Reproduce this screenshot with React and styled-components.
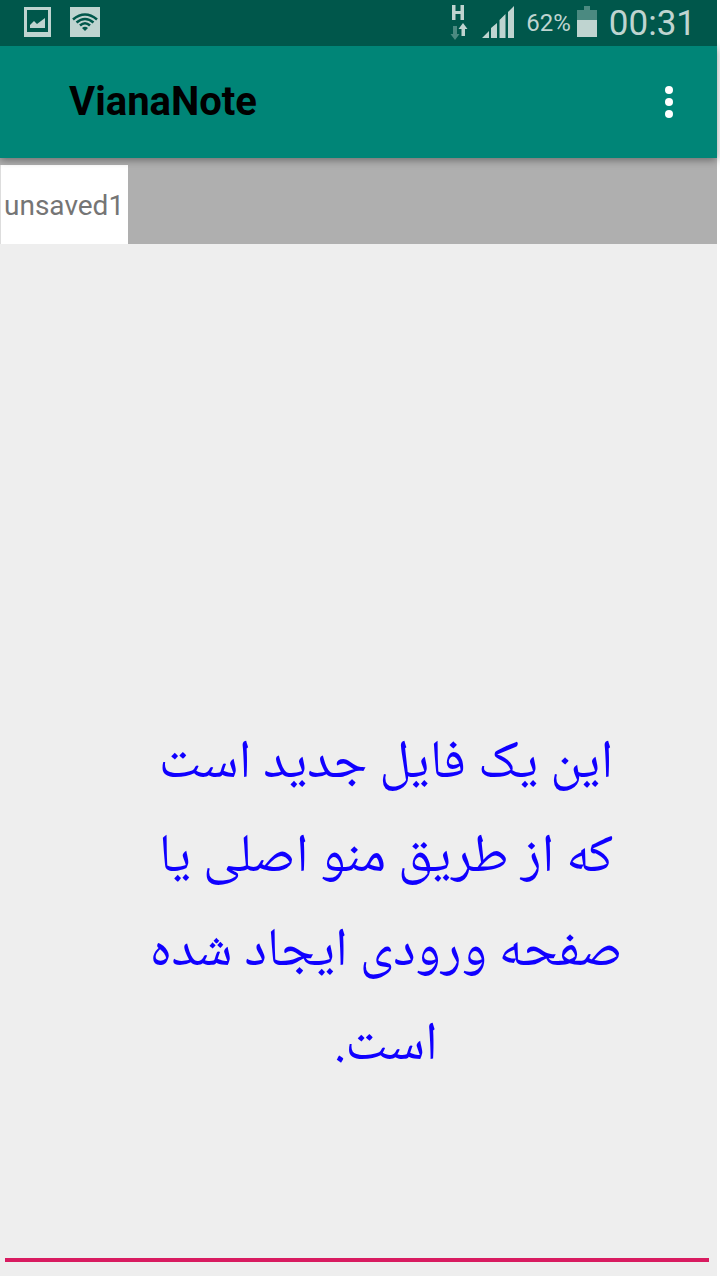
import React, { useState } from "react";
import styled, { createGlobalStyle } from "styled-components";

const textoInicial = [
  "این یک فایل جدید است",
  "که از طریق منو اصلی یا",
  "صفحه ورودی ایجاد شده",
  "است.",
].join("\n");

const IconeImagem = () => (
  <svg width="27" height="30" viewBox="0 0 27 30" fill="#bfd4d0">
    <path fillRule="evenodd" d="M0 0h27v30H0zM3 3v22h21V3z" />
    <path d="M6 21v-3l4-4 3 3 8-6v10z" />
  </svg>
);

const IconeWifi = () => (
  <svg width="30" height="30" viewBox="0 0 30 30">
    <path fill="#bfd4d0" d="M0 0h30v30H0z" />
    <g fill="none" stroke="#00574b" strokeWidth="2.6">
      <path d="M3 12.5Q15 2.5 27 12.5" />
      <path d="M6.5 15.5Q15 8.5 23.5 15.5" />
      <path d="M10 18.5Q15 14 20 18.5" />
    </g>
    <path fill="#00574b" d="M12 21q3-2.4 6 0l-3 3z" />
  </svg>
);

const IconeDados = () => (
  <svg width="20" height="36" viewBox="0 0 20 36">
    <path fill="#bfd4d0" d="M2 1h3.5v6h5V1H14v15h-3.500V10h-5v6H2z" />
    <path fill="#4b8a81" d="M3 22h4v8h2.500l-4.500 6-4.500-6H3z" />
    <path fill="#bfd4d0" d="M11.500 32v-7H8.500l4.500-6 4.500 6h-2.500v7z" />
  </svg>
);

const IconeSinal = () => (
  <svg width="32" height="32" viewBox="0 0 32 32" fill="#bfd4d0">
    <path d="M0 32l7-7v7zM9 32V22l6-5v15zM17.500 32V14l6-6v24zM26 32V6l6-6v32z" />
  </svg>
);

const IconeBateria = () => (
  <svg width="20" height="32" viewBox="0 0 20 32">
    <path fill="#4b8a81" d="M7 0h6v4h7v10H0V4h7z" />
    <path fill="#bfd4d0" d="M0 14h20v17H0z" />
  </svg>
);

const IconeMenu = () => (
  <svg width="8" height="32" viewBox="0 0 8 32" fill="#fff">
    <circle cx="4" cy="4" r="4" />
    <circle cx="4" cy="16" r="4" />
    <circle cx="4" cy="28" r="4" />
  </svg>
);

export default function App() {
  const [texto, setTexto] = useState(textoInicial);

  return (
    <>
      <GlobalStyle />
      <Tela>
        <BarraStatus>
          <Notificacoes>
            <IconeImagem />
            <IconeWifi />
          </Notificacoes>
          <Indicadores>
            <IconeDados />
            <IconeSinal />
            <Bateria>
              <Carga>62%</Carga>
              <IconeBateria />
            </Bateria>
            <Relogio>00:31</Relogio>
          </Indicadores>
        </BarraStatus>
        <Cabecalho>
          <Titulo>VianaNote</Titulo>
          <BotaoMenu aria-label="Menu">
            <IconeMenu />
          </BotaoMenu>
        </Cabecalho>
        <Abas>
          <Aba>unsaved1</Aba>
        </Abas>
        <Editor>
          <Texto
            dir="rtl"
            lang="fa"
            aria-label="unsaved1"
            spellCheck={false}
            value={texto}
            onChange={(e) => setTexto(e.target.value)}
          />
        </Editor>
      </Tela>
    </>
  );
}

const GlobalStyle = createGlobalStyle`
  * {
    box-sizing: border-box;
  }
  body {
    margin: 0;
    background-color: #fff;
    font-family: Roboto, sans-serif;
  }
  svg {
    display: block;
    flex-shrink: 0;
  }
`;

const Tela = styled.div`
  display: flex;
  flex-direction: column;
  min-height: calc(100vh - 4px);
  margin: 0 3px 4px 0;
  background-color: #eee;
`;

const BarraStatus = styled.div`
  position: relative;
  z-index: 2;
  display: flex;
  justify-content: space-between;
  align-items: center;
  height: 46px;
  padding: 0 21px 2px 24px;
  background-color: #00574b;
  color: #bfd4d0;
`;

const Notificacoes = styled.div`
  display: flex;
  gap: 19px;
`;

const Indicadores = styled.div`
  display: flex;
  align-items: center;
  gap: 12px;
`;

const Bateria = styled.div`
  display: flex;
  align-items: center;
  gap: 6px;
`;

const Carga = styled.span`
  padding-top: 2px;
  font-size: 24px;
`;

const Relogio = styled.time`
  padding-top: 2px;
  font-size: 35px;
`;

const Cabecalho = styled.header`
  position: relative;
  z-index: 1;
  display: flex;
  justify-content: space-between;
  align-items: center;
  height: 112px;
  padding: 0 24px 0 69px;
  background-color: #008577;
  box-shadow: 0 2px 8px rgba(0, 0, 0, 0.4);
`;

const Titulo = styled.h1`
  margin: 0;
  padding-bottom: 2px;
  color: #000;
  font-size: 40px;
  font-weight: 700;
`;

const BotaoMenu = styled.button`
  display: flex;
  justify-content: center;
  align-items: center;
  width: 48px;
  height: 64px;
  padding: 0;
  border: none;
  background: none;
  cursor: pointer;
`;

const Abas = styled.nav`
  display: flex;
  height: 86px;
  padding: 7px 0 0;
  background-color: #afafaf;
`;

const Aba = styled.button`
  padding: 2px 4px 0;
  border: none;
  border-left: 1px solid #ddd;
  padding-left: 3px;
  background-color: #fff;
  color: #757575;
  font-family: inherit;
  font-size: 28px;
  cursor: pointer;
`;

const Editor = styled.main`
  display: flex;
  flex: 1;
  padding: 0 8px 14px 5px;
`;

const Texto = styled.textarea`
  flex: 1;
  min-width: 0;
  padding: 474px 32px 0 90px;
  border: none;
  border-bottom: 4px solid #d81b60;
  outline: none;
  resize: none;
  overflow: hidden;
  background: none;
  color: #1000ff;
  font-family: "Noto Naskh Arabic", "Noto Sans Arabic", "DejaVu Sans", sans-serif;
  font-size: 54px;
  line-height: 94px;
  text-align: center;
`;
